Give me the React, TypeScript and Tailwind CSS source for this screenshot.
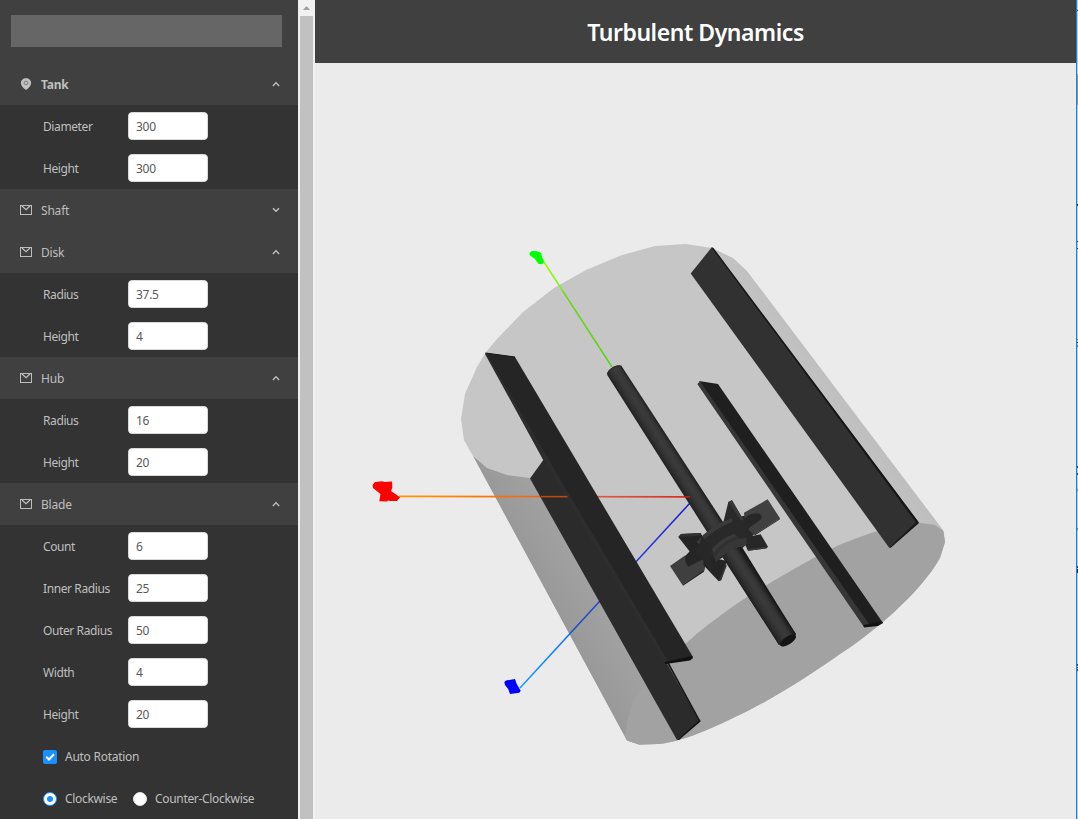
import React from "react";

type Field = { label: string; value: string };
type Section = { title: string; open: boolean; fields: Field[] };

const sections: Section[] = [
  { title: "Tank", open: true, fields: [{ label: "Diameter", value: "300" }, { label: "Height", value: "300" }] },
  { title: "Shaft", open: false, fields: [] },
  { title: "Disk", open: true, fields: [{ label: "Radius", value: "37.5" }, { label: "Height", value: "4" }] },
  { title: "Hub", open: true, fields: [{ label: "Radius", value: "16" }, { label: "Height", value: "20" }] },
  {
    title: "Blade",
    open: true,
    fields: [
      { label: "Count", value: "6" },
      { label: "Inner Radius", value: "25" },
      { label: "Outer Radius", value: "50" },
      { label: "Width", value: "4" },
      { label: "Height", value: "20" },
    ],
  },
];

function PinIcon() {
  return (
    <svg className="h-3 w-3" viewBox="0 0 12 12" fill="none">
      <path d="M6 .2C3 .2.900 2.300.900 5c0 2.700 2.300 5 5.100 7 2.800-2 5.100-4.300 5.100-7C11.100 2.300 9 .2 6 .2Z" fill="#c2c2c2" />
      <circle cx="6" cy="4.900" r="1.900" stroke="#777" strokeWidth="0.900" />
    </svg>
  );
}

function MailIcon() {
  return (
    <svg className="h-3 w-3" viewBox="0 0 12 12" fill="none" stroke="#bdbdbd">
      <rect x="0.500" y="1.500" width="11" height="9" strokeWidth="1" />
      <path d="M2 2 6 5.700 10 2" strokeWidth="1.300" />
    </svg>
  );
}

function Chevron({ open }: { open: boolean }) {
  return (
    <svg className="h-2 w-2" viewBox="0 0 8 8" fill="none" stroke="#c4c4c4" strokeWidth="1.300">
      <path d={open ? "M0.900 6 4 2.600 7.100 6" : "M1 2.300 4 5.300 7 2.300"} />
    </svg>
  );
}

function FieldRow({ label, value }: Field) {
  return (
    <div className="flex h-[42px] items-center pl-[43px]">
      <span className="w-[85px] pt-0.5 tracking-[-0.4px] whitespace-nowrap text-[#bfbfbf]">{label}</span>
      <span className="flex h-7 w-20 items-center rounded border border-[#d9d9d9] bg-white pt-px pl-[7px] tracking-[-0.3px] text-[#595959]">
        {value}
      </span>
    </div>
  );
}

function SectionBlock({ section, first }: { section: Section; first: boolean }) {
  return (
    <div>
      <div className="flex h-[42px] items-center bg-[#404040] pr-[18px] pl-5 tracking-[-0.2px]">
        {first ? <PinIcon /> : <MailIcon />}
        <span className={first ? "ml-[9px] flex-1 pt-0.5 font-bold text-[#bfbfbf]" : "ml-[9px] flex-1 pt-0.5 text-[#bfbfbf]"}>
          {section.title}
        </span>
        <Chevron open={section.open} />
      </div>
      {section.fields.map((f) => (
        <FieldRow key={f.label} {...f} />
      ))}
    </div>
  );
}

function Sidebar() {
  return (
    <aside className="w-[298px] shrink-0 overflow-hidden bg-[#333333] text-[12px]">
      <div className="h-[63px] bg-[#404040] pt-[15px] pl-[11px]">
        <div className="h-8 w-[271px] bg-[#666666]" />
      </div>
      {sections.map((s, i) => (
        <SectionBlock key={s.title} section={s} first={i === 0} />
      ))}
      <div className="flex h-[42px] items-center pt-0.5 pl-[43px] tracking-[-0.27px] text-[#bfbfbf]">
        <span className="mr-2 flex h-3.5 w-3.5 items-center justify-center rounded-[2px] bg-[#1890ff]">
          <svg className="h-3.5 w-3.5" viewBox="0 0 14 14" fill="none" stroke="#fff" strokeWidth="2">
            <path d="M3.300 6.800 6 9.500 11 4.300" />
          </svg>
        </span>
        <span>Auto Rotation</span>
      </div>
      <div className="flex h-[42px] items-center pt-0.5 pl-[43px] tracking-[-0.32px] text-[#bfbfbf]">
        <span className="mr-2 flex h-3.5 w-3.5 items-center justify-center rounded-full border border-[#1890ff] bg-white">
          <span className="h-1.5 w-1.5 rounded-full bg-[#1890ff]" />
        </span>
        <span className="w-[68px]">Clockwise</span>
        <span className="mr-2 h-3.5 w-3.5 rounded-full border border-[#e4e4e4] bg-white" />
        <span className="whitespace-nowrap">Counter-Clockwise</span>
      </div>
    </aside>
  );
}

function Scrollbar() {
  return (
    <div className="flex w-[17px] shrink-0 flex-col bg-[#f1f1f1]">
      <div className="flex h-4 items-center justify-center">
        <svg className="h-1 w-[7px]" viewBox="0 0 7 4">
          <path d="M0 4 3.500 0 7 4Z" fill="#a0a0a0" />
        </svg>
      </div>
      <div className="ml-0.5 w-[13px] flex-1 bg-[#c1c1c1]" />
    </div>
  );
}

function Impeller() {
  return (
    <g transform="translate(664 494) scale(0.333333)">
      <ellipse cx="179" cy="140" rx="132" ry="43" transform="rotate(-32 179 140)" fill="#282828" />
      <path d="M43 129 51 120 110 117 128 150 134 184 86 184Z" fill="#242424" />
      <path d="M43 129 51 120 110 117 107 125Z" fill="#323232" />
      <path d="M18 216 62 185 125 200 122 229 55 272Z" fill="#3f3f3f" />
      <path d="M55 272 119 229 120 233 57 275Z" fill="#222" />
      <path d="M240 56 311 16 348 73 270 122 245 100Z" fill="#404040" />
      <path d="M270 122 348 73 348 76 273 124Z" fill="#222" />
      <path d="M232 90Q240 72 254 63 278 54 288 60 296 65 291 76L258 100 245 115Z" fill="#272727" />
      <path d="M255 117 264 126 290 121 312 158 308 163 252 170 234 132Z" fill="#272727" />
      <path d="M250 166 310 158 308 163 252 170Z" fill="#383838" />
      <path d="M120 185 186 200 186 208 172 258 164 262 118 213Z" fill="#242424" />
      <path d="M186 207 188 216 172 258 164 262Z" fill="#363636" />
      <path d="M64 185Q61 204 73 218L112 198 140 184 100 150Z" fill="#252525" />
      <path d="M178 85 193 24 204 19 236 74 250 100 256 138 225 130 205 80 180 90Z" fill="#292929" />
      <path d="M193 24 204 19 239 78 231 80Z" fill="#383838" />
      <path d="M98 145Q135 96 203 73L207 83Q148 105 108 152Z" fill="#3a3a3a" />
      <path d="M106 151Q147 105 207 83L225 78 245 110 247 145 180 190 130 183Z" fill="#292929" />
      <path d="M144 165Q165 132 213 119L247 152 225 170 188 175 156 201 148 190Z" fill="#303030" />
      <path d="M144 166Q170 134 211 120L216 127Q173 145 150 176Z" fill="#3a3a3a" />
      <path d="M153 188Q175 155 218 136L247 132 248 150 230 162 187 178 168 190 156 205Z" fill="#373737" />
      <path d="M108 147 113 125 134 154 142 200 150 222 140 230 118 200 92 178Z" fill="#272727" />
    </g>
  );
}

function Viewport() {
  return (
    <svg className="block h-[756px] w-[761px]" viewBox="315 63 761 756">
      <defs>
        <linearGradient id="shaft" gradientUnits="userSpaceOnUse" x1="606.400" y1="376.500" x2="623.600" y2="365.500">
          <stop offset="0" stopColor="#1d1d1d" />
          <stop offset="0.300" stopColor="#323232" />
          <stop offset="0.550" stopColor="#3b3b3b" />
          <stop offset="0.750" stopColor="#353535" />
          <stop offset="1" stopColor="#191919" />
        </linearGradient>
        <linearGradient id="wall" gradientUnits="userSpaceOnUse" x1="805" y1="405" x2="845" y2="377">
          <stop offset="0" stopColor="#c6c6c6" />
          <stop offset="1" stopColor="#bcbcbc" />
        </linearGradient>
        <linearGradient id="side" gradientUnits="userSpaceOnUse" x1="545" y1="600" x2="600" y2="570">
          <stop offset="0" stopColor="#989898" />
          <stop offset="1" stopColor="#a4a4a4" />
        </linearGradient>
        <linearGradient id="redAxis" gradientUnits="userSpaceOnUse" x1="399" y1="0" x2="690" y2="0">
          <stop offset="0" stopColor="#ff9900" />
          <stop offset="0.550" stopColor="#f45a10" />
          <stop offset="0.700" stopColor="#df5640" />
          <stop offset="1" stopColor="#d72b24" />
        </linearGradient>
        <linearGradient id="greenAxis" gradientUnits="userSpaceOnUse" x1="544" y1="262" x2="612" y2="367">
          <stop offset="0" stopColor="#94ff00" />
          <stop offset="0.250" stopColor="#80ee10" />
          <stop offset="0.300" stopColor="#70d51a" />
          <stop offset="1" stopColor="#51d518" />
        </linearGradient>
        <linearGradient id="blueAxis" gradientUnits="userSpaceOnUse" x1="520" y1="688" x2="690" y2="503">
          <stop offset="0" stopColor="#109dff" />
          <stop offset="0.280" stopColor="#126ff2" />
          <stop offset="0.310" stopColor="#1e50bd" />
          <stop offset="0.700" stopColor="#2638da" />
          <stop offset="1" stopColor="#1818d4" />
        </linearGradient>
      </defs>

      <path
        d="M461 419 465 394 477 367 486 352 497 339 523 312 554 288 586 270 622 255 655 246 686 244 712 248 733 258 747 271 943 530 945 542 940 558C920 594 870 635 840 654 812 674 767 703 733 718 700 734 675 743 658 744L639 744.600 627 740.500 472 454 464 440Z"
        fill="url(#wall)"
      />
      <path d="M464 440 473 456 487 468 507 475 530 478 677 740 658 744 639 744.600 627 740.500 472 454Z" fill="url(#side)" />
      <path
        d="M943.500 531 935 525 918 522.600C890 525 850 540 833 548 808 560 763 587 747 597 730 608 703 628 692 638 672 655 650 680 640 691L633 700 627 722 625 737 627 740.500 639 744.600 658 744C675 743 700 734 733 718 767 703 812 674 840 654 870 635 920 594 940 558L945 542Z"
        fill="#a2a2a2"
      />

      <path d="M712 247 918 522 889 547.500 690.700 273.500Z" fill="#313131" />
      <path d="M711.500 247.500 713.500 248 919 522.500 916.500 523Z" fill="#151515" />
      <path d="M889 547.500 890.500 548 919 523 917 521.500Z" fill="#181818" />

      <path d="M699 381 718 384 883 623 867 625.500Z" fill="#1f1f1f" />
      <path d="M697.300 384 700 381.500 869 624 864 627Z" fill="#363636" />
      <path d="M863.500 625 882 621.500 883 623 878 626 864 627.500Z" fill="#131313" />

      <path d="M544 262 612 367" stroke="url(#greenAxis)" strokeWidth="1.500" />
      <path d="M690 503 520 688" stroke="url(#blueAxis)" strokeWidth="1.500" />
      <path d="M399 496.300 690 496.900" stroke="url(#redAxis)" strokeWidth="1.700" />

      <path d="M607.200 375Q607 371 613 367 620 364 622.500 367.500L796 634 779 645Z" fill="url(#shaft)" />
      <path d="M685 496.900H690" stroke="#c52020" strokeWidth="1.500" />
      <Impeller />
      <path d="M723 558Q731 546 742 547L796 634.500 779 645Z" fill="url(#shaft)" />
      <path d="M607.200 374Q608 370 613 367.500 619 364.500 622 366.500" fill="none" stroke="#242424" />
      <ellipse cx="788" cy="640.500" rx="9.300" ry="3.900" transform="rotate(-33 788 640.500)" fill="#151515" />

      <path d="M544 459 530 478.500 677 740 700 721 666 662Z" fill="#2b2b2b" />
      <path d="M677 740 679 740 700.500 721.500 700 719.500Z" fill="#141414" />
      <path d="M667 663 669 663 700.500 721 699 721Z" fill="#171717" />
      <path d="M485.500 353 515 357 693 657 666 662.500 543 459Z" fill="#252525" />
      <path d="M485 354 486 353 546 455 668 661 665 663 543 459.500Z" fill="#2d2d2d" />
      <path d="M665 662 692 656 693 658 690 660.500 665.500 664Z" fill="#111" />
      <path d="M485.500 353 515 357" stroke="#151515" />
      <path d="M541 496.600H567.500" stroke="#bf4a0d" strokeWidth="1.500" />

      <path d="M372.500 485 375 482 383 481.300 384 482 392 481.500 392.300 487.500 391 491 400 497.300 397 501 390 501 388 500.500 387 501.500 379.300 501.300 380.500 494 373 488Z" fill="#f00" />
      <path d="M529.300 253.300 531.700 251 536 251 541 252.700 542 257 544.300 261.700 542 264.300 538.300 263.700 535 259 530 255.500Z" fill="#0f0" />
      <path d="M504.300 682 506 680.500 515 679 516.700 684 520.700 690.700 519.300 692.700 510 694 508.300 689.300 505 685Z" fill="#00f" />
    </svg>
  );
}

const edgeMarks = [
  { y: 10, h: 1, c: "#1b2b3b" },
  { y: 74, h: 31, c: "#8a9097" },
  { y: 204, h: 2, c: "#17324a" },
  { y: 241, h: 1, c: "#14293c" },
  { y: 248, h: 1, c: "#14293c" },
  { y: 339, h: 1, c: "#4c7390" },
  { y: 342, h: 1, c: "#14293c" },
  { y: 345, h: 2, c: "#5f86a3" },
  { y: 466, h: 2, c: "#2c4e69" },
  { y: 473, h: 2, c: "#2c4e69" },
  { y: 489, h: 2, c: "#6299ad" },
  { y: 528, h: 2, c: "#519a94" },
  { y: 566, h: 2, c: "#1d3d59" },
  { y: 569, h: 4, c: "#14293c" },
  { y: 664, h: 2, c: "#2c4e69" },
  { y: 667, h: 1, c: "#2c4e69" },
  { y: 669, h: 2, c: "#2c4e69" },
];

export default function App() {
  return (
    <div className="flex h-[819px] w-[1078px] overflow-hidden font-['Noto_Sans','Open_Sans',sans-serif]">
      <Sidebar />
      <Scrollbar />
      <main className="flex w-[761px] shrink-0 flex-col bg-[#ebebeb]">
        <header className="flex h-[63px] items-center justify-center bg-[#404040] pt-px">
          <h1 className="text-[23px] font-semibold tracking-[-0.45px] whitespace-nowrap text-white">Turbulent Dynamics</h1>
        </header>
        <Viewport />
      </main>
      <div className="w-px bg-[#1883d7]" />
      <svg className="h-[819px] w-px" viewBox="0 0 1 819" shapeRendering="crispEdges">
        <rect width="1" height="819" fill="#a9d3f2" />
        {edgeMarks.map((m) => (
          <rect key={m.y} y={m.y} width="1" height={m.h} fill={m.c} />
        ))}
      </svg>
    </div>
  );
}
